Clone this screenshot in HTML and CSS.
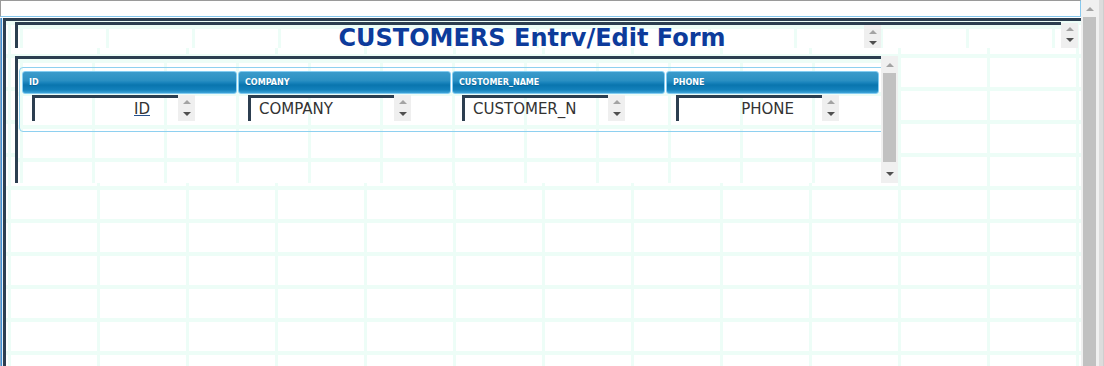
FILE: index.html
```html
<!DOCTYPE html>
<html>
<head lang="en">
    <meta charset="UTF-8">
    <title>CUSTOMERS Entry/Edit Form</title>
    <link rel="stylesheet" href="styles.css">
</head>
<body>

<div class="page">
    <div class="main">
        <div class="top-field"></div>
        <div class="frame">
            <div class="title-box">
                <div class="title-area">
                    <div class="title">CUSTOMERS Entrv/Edit Form</div>
                    <div class="spin spin-mid"><i class="up"></i><i class="down"></i></div>
                </div>
                <div class="spin spin-end"><i class="up"></i><i class="down"></i></div>
            </div>
            <div class="grid-box">
                <div class="grid-area">
                    <div class="table">
                        <div class="head">
                            <div class="th c1">ID</div>
                            <div class="th">COMPANY</div>
                            <div class="th">CUSTOMER_NAME</div>
                            <div class="th">PHONE</div>
                        </div>
                        <div class="row">
                            <div class="td c1">
                                <div class="field right"><span class="val"><u>ID</u></span></div>
                                <div class="spin"><i class="up"></i><i class="down"></i></div>
                            </div>
                            <div class="td">
                                <div class="field"><span class="val">COMPANY</span></div>
                                <div class="spin"><i class="up"></i><i class="down"></i></div>
                            </div>
                            <div class="td">
                                <div class="field"><span class="val">CUSTOMER_N</span></div>
                                <div class="spin"><i class="up"></i><i class="down"></i></div>
                            </div>
                            <div class="td">
                                <div class="field right"><span class="val">PHONE</span></div>
                                <div class="spin"><i class="up"></i><i class="down"></i></div>
                            </div>
                        </div>
                    </div>
                </div>
                <div class="vscroll grid-scroll">
                    <i class="up"></i>
                    <div class="thumb"></div>
                    <i class="down"></i>
                </div>
            </div>
        </div>
    </div>
    <div class="vscroll page-scroll">
        <i class="up"></i>
        <div class="thumb"></div>
    </div>
    <div class="edge"></div>
</div>

</body>
</html>
```

FILE: styles.css
```css
* {
    padding: 0;
    margin: 0;
    box-sizing: border-box;
}
html, body {
    height: 100%;
    overflow: hidden;
    background: #fff;
    font-family: "DejaVu Sans", Verdana, sans-serif;
}
.page {
    display: flex;
    height: 366px;
}
.main {
    width: 1081px;
}
.top-field {
    height: 17px;
    background: #fff;
    border-top: 1px solid #9a9a9a;
    border-left: 1px solid #9a9a9a;
    border-right: 1px solid #86c8ee;
    border-bottom: 1px solid #86c8ee;
}

/* mint grid texture, one size per box */
.frame, .title-area, .grid-area {
    background-color: #fff;
    background-image:
        linear-gradient(#edfdf7 4px, transparent 4px),
        linear-gradient(90deg, transparent 2px, #edfdf7 2px, #edfdf7 5px, transparent 5px);
}
.frame {
    margin: 1px 0 0 3px;
    height: 360px;
    border-top: 3px solid #2c3e50;
    border-left: 3px solid #2c3e50;
    background-size: 89px 33px;
    padding: 1px 3px 0 9px;
    box-shadow: -1px 0 0 #e4f3fb, -2px 0 0 #3d8fd6, -3px 0 0 #8aa6c2;
}

/* title row */
.title-box {
    display: flex;
    height: 26px;
}
.title-area {
    position: relative;
    flex: 1;
    height: 26px;
    border-top: 3px solid #2c3e50;
    border-left: 3px solid #2c3e50;
    background-size: 86px 33px;
    padding-right: 15px;
}
.title {
    text-align: center;
    font-weight: bold;
    font-size: 24px;
    line-height: 27px;
    color: #0d3b9b;
    white-space: nowrap;
}

/* little spinner / scroll arrows */
.spin {
    display: flex;
    flex-direction: column;
    justify-content: space-between;
    align-items: center;
    width: 17px;
    height: 26px;
    padding: 5px 0;
    background: #efefef;
}
.up, .down {
    display: block;
    width: 0;
    height: 0;
    border-left: 4px solid transparent;
    border-right: 4px solid transparent;
}
.up {
    border-bottom: 4px solid #a3a3a3;
}
.down {
    border-top: 4px solid #505050;
}
.spin-mid {
    position: absolute;
    left: 846px;
    top: 0;
    height: 23px;
    padding: 5px 0 3px;
}
.spin-end {
    margin-top: 1px;
    height: 25px;
    padding: 4px 0 6px;
}

/* grid */
.grid-box {
    display: flex;
    margin-top: 8px;
    height: 127px;
}
.grid-area {
    width: 866px;
    height: 127px;
    overflow: hidden;
    border-top: 3px solid #2c3e50;
    border-left: 3px solid #2c3e50;
    background-size: 72px 33px;
    padding: 8px 0 0 1px;
}
.table {
    width: 866px;
    height: 65px;
    border: 1px solid #8ed0f0;
    border-radius: 4px;
    padding: 3px 0 0 2px;
}
.head, .row {
    display: flex;
    gap: 1px;
}
.th, .td {
    width: 213px;
}
.c1 {
    width: 215px;
}
.th {
    height: 23px;
    border: 1px solid #84ccf1;
    border-radius: 3px;
    padding-left: 6px;
    font-size: 8px;
    line-height: 21px;
    font-weight: bold;
    color: #fff;
    text-shadow: 0 1px 0 rgba(0, 40, 80, .3);
    background: linear-gradient(#3b9bcb 0, #2b90c3 40%, #1a84bc 50%, #0975ae 62%, #1381bb 85%, #3ea4d8 100%);
}
.row {
    padding-top: 1px;
}
.td {
    display: flex;
    padding-left: 10px;
}
.field {
    width: 146px;
    height: 26px;
    border-top: 3px solid #2c3e50;
    border-left: 3px solid #2c3e50;
    padding: 0 28px 0 8px;
    font-size: 15px;
    line-height: 23px;
    color: #333;
    white-space: nowrap;
}
.val {
    display: block;
    overflow: hidden;
}
.field.right {
    text-align: right;
}
.field u {
    text-decoration-color: #24508c;
}

/* scrollbars */
.vscroll {
    display: flex;
    flex-direction: column;
    align-items: center;
    width: 17px;
    background: #f0f0f0;
}
.thumb {
    width: 13px;
    background: #c1c1c1;
}
.grid-scroll {
    height: 127px;
    padding: 7px 0;
}
.grid-scroll .thumb {
    height: 89px;
    margin-top: 6px;
}
.grid-scroll .down {
    margin-top: auto;
}
.page-scroll {
    height: 366px;
    padding-top: 7px;
}
.page-scroll .thumb {
    flex: 1;
    margin-top: 6px;
}
.edge {
    width: 6px;
    height: 366px;
    background: #dcdcdc;
    border-left: 1px solid #f0f0f0;
    border-right: 1px solid #cfcfcf;
}
```
